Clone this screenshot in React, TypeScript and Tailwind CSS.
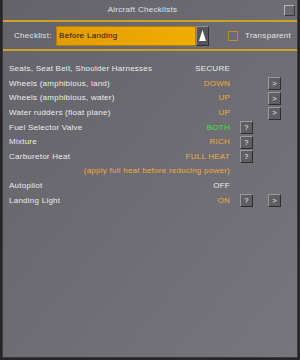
import React from "react";

type Row = { label: string; value?: string; color?: string; q?: boolean; go?: boolean; note?: string };

const rows: Row[] = [
  { label: "Seats, Seat Belt, Shoulder Harnesses", value: "SECURE", color: "text-[#ececec]" },
  { label: "Wheels (amphibious, land)", value: "DOWN", color: "text-[#f0aa3c]", go: true },
  { label: "Wheels (amphibious, water)", value: "UP", color: "text-[#f0aa3c]", go: true },
  { label: "Water rudders (float plane)", value: "UP", color: "text-[#f0aa3c]", go: true },
  { label: "Fuel Selector Valve", value: "BOTH", color: "text-[#44e044]", q: true },
  { label: "Mixture", value: "RICH", color: "text-[#f0aa3c]", q: true },
  { label: "Carburetor Heat", value: "FULL HEAT", color: "text-[#f0aa3c]", q: true },
  { label: "", note: "(apply full heat before reducing power)" },
  { label: "Autopilot", value: "OFF", color: "text-[#ececec]" },
  { label: "Landing Light", value: "ON", color: "text-[#f0aa3c]", q: true, go: true },
];

function SmallBtn({ children }: { children: React.ReactNode }) {
  return (
    <div className="w-[13px] h-[13px] flex items-center justify-center bg-[#5f5e63] border border-t-[#9a999e] border-l-[#9a999e] border-b-[#2e2d31] border-r-[#2e2d31] text-[#f0f0f0] text-[7.5px] leading-none">
      {children}
    </div>
  );
}

export default function App() {
  return (
    <div
      className="w-[300px] h-[360px] bg-[#26262a] relative overflow-hidden"
      style={{ fontFamily: '"Liberation Sans", Arial, sans-serif' }}
    >
      <div className="absolute left-[2px] top-0 w-[296px] h-[358px] border-r border-b border-l border-[#3a393e] bg-gradient-to-br from-[#646369] to-[#77767c] flex flex-col">
        {/* title */}
        <div className="h-[20px] flex items-center justify-center pr-[15px] relative text-[#e2e2e2] text-[8px] tracking-[0.3px]">
          Aircraft Checklists
          <div className="absolute right-[2px] top-[5px] w-[11px] h-[11px] bg-[#6a696e] border border-t-[#b5b4b9] border-l-[#b5b4b9] border-b-[#3a393d] border-r-[#3a393d]" />
        </div>
        <div className="h-[2px] bg-[#c9a227]" />
        {/* checklist row */}
        <div className="h-[27px] flex items-center">
          <span className="ml-[11px] w-[42px] text-[#e4e4e4] text-[8px] tracking-[0.3px]">Checklist:</span>
          <div className="w-[140px] h-[20px] bg-gradient-to-r from-[#e29c00] to-[#f0ad00] border border-[#b77d00] flex items-center pl-[2px] text-[#1a1200] text-[8px] tracking-[0.3px]">
            Before Landing
          </div>
          <div className="w-[13px] h-[20px] bg-[#55545a] border border-t-[#8e8d92] border-l-[#8e8d92] border-b-[#2f2e33] border-r-[#2f2e33] flex items-center justify-center">
            <svg width="7" height="11" viewBox="0 0 7 11">
              <polygon points="3.5,0 7,11 0,11" fill="#ffffff" />
            </svg>
          </div>
          <div className="ml-[19px] w-[10px] h-[10px] border border-[#b88d2a]" />
          <span className="ml-[7px] text-[#e4e4e4] text-[8px] tracking-[0.3px]">Transparent</span>
        </div>
        <div className="h-[2px] bg-[#c9a227]" />
        {/* rows */}
        <div className="pt-[11px] flex flex-col">
          {rows.map((r, i) => (
            <div key={i} className="h-[14.6px] flex items-center text-[8px] tracking-[0.25px]">
              {r.note ? (
                <span className="ml-[6px] w-[221px] text-right text-[#f0aa3c] whitespace-nowrap">{r.note}</span>
              ) : (
                <>
                  <span className="ml-[6px] w-[154px] text-[#ececec] whitespace-nowrap">{r.label}</span>
                  <span className={`w-[67px] text-right ${r.color}`}>{r.value}</span>
                  <div className="ml-[10px] w-[13px]">{r.q && <SmallBtn>?</SmallBtn>}</div>
                  <div className="ml-[15px] w-[13px]">{r.go && <SmallBtn>&gt;</SmallBtn>}</div>
                </>
              )}
            </div>
          ))}
        </div>
      </div>
    </div>
  );
}
